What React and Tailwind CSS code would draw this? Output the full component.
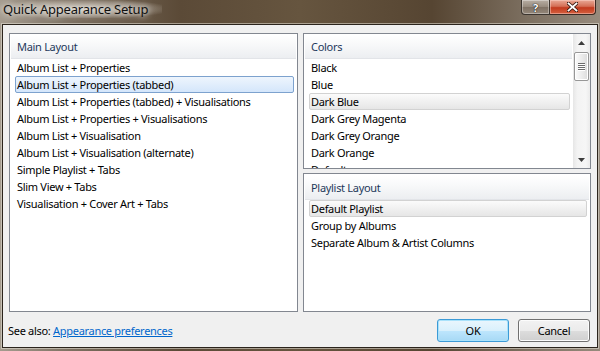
import React from 'react'

/* ---------- datos ---------- */
const mainLayouts = [
  'Album List + Properties',
  'Album List + Properties (tabbed)',
  'Album List + Properties (tabbed) + Visualisations',
  'Album List + Properties + Visualisations',
  'Album List + Visualisation',
  'Album List + Visualisation (alternate)',
  'Simple Playlist + Tabs',
  'Slim View + Tabs',
  'Visualisation + Cover Art + Tabs',
]
const colorSchemes = ['Black', 'Blue', 'Dark Blue', 'Dark Grey Magenta', 'Dark Grey Orange', 'Dark Orange', 'Default']
const playlistLayouts = ['Default Playlist', 'Group by Albums', 'Separate Album & Artist Columns']

/* ---------- piezas ---------- */
const Header = ({ children }) => (
  <div className="mx-[1px] mt-[1px] h-[24px] shrink-0 flex items-center pl-[6px] border-b border-[#e2e4e8] bg-[linear-gradient(#ffffff,#f7f8f9_45%,#eceef1)] text-[#1e395b]">
    {children}
  </div>
)

const Item = ({ text, sel }) => (
  <div
    className={`h-[17px] shrink-0 ml-[5px] mr-[3px] px-[1px] flex items-center rounded-[2px] border whitespace-nowrap
      ${sel === 'active'
        ? 'border-[#7da2ce] bg-[linear-gradient(#eef5fd,#d4e6fb)]'
        : sel === 'inactive'
          ? 'border-[#d2d2d2] bg-[linear-gradient(#fbfbfb,#e6e6e6)]'
          : 'border-transparent'}`}
  >
    {text}
  </div>
)

const ScrollBar = () => (
  <div className="w-[17px] shrink-0 flex flex-col items-center bg-[linear-gradient(90deg,#e6e6e6,#f3f3f3_25%,#f6f6f6_75%,#ebebeb)]">
    <div className="h-[17px] w-full flex items-center justify-center">
      <svg width="7" height="4" viewBox="0 0 7 4"><path d="M3.5 0 L7 4 L0 4 Z" fill="#3c3c3c" /></svg>
    </div>
    <div className="mt-[1px] w-[15px] h-[29px] rounded-[2px] border border-[#979797] bg-[linear-gradient(90deg,#fbfbfb,#ececec_50%,#dcdcdc)] shadow-[inset_0_0_0_1px_#ffffff] flex flex-col items-center justify-center gap-[1px]">
      {[0, 1, 2, 3].map(i => (
        <div key={i} className="w-[7px] h-[1px] bg-[#6c6c6c] shadow-[0_1px_0_#ffffff]" />
      ))}
    </div>
    <div className="flex-1" />
    <div className="h-[17px] w-full flex items-center justify-center">
      <svg width="7" height="4" viewBox="0 0 7 4"><path d="M0 0 L7 0 L3.5 4 Z" fill="#3c3c3c" /></svg>
    </div>
  </div>
)

const Button = ({ children, focused }) => (
  <div
    className={`w-[72px] h-[23px] rounded-[3px] border flex items-center justify-center
      ${focused
        ? 'border-[#3c9ad6] shadow-[inset_0_0_0_1px_#a9e2fb] bg-[linear-gradient(#eaf6fd,#d9f0fc_50%,#bee6fd_51%,#a7d9f5)]'
        : 'border-[#707070] shadow-[inset_0_0_0_1px_#fcfcfc] bg-[linear-gradient(#f2f2f2,#ebebeb_50%,#dddddd_51%,#cfcfcf)]'}`}
  >
    {children}
  </div>
)

export default function App() {
  return (
    <div className="w-[600px] h-[351px] flex flex-col overflow-hidden bg-[linear-gradient(90deg,#a59c8f,#7c6f60_12%,#5b4a37_30%,#66553f_50%,#564532_72%,#7d7061_88%,#978b7d)] font-['Segoe_UI','Noto_Sans',sans-serif] text-[11px] tracking-[-0.3px] leading-[16px] text-black">

      {/* BARRA DE TITULO */}
      <div className="h-[24px] shrink-0 flex items-start">
        <div className="pl-[3px] pt-[1px] pr-[14px] text-[13px] tracking-[-0.2px] leading-[17px] text-[#101010] bg-[radial-gradient(ellipse_at_center,rgba(235,230,220,0.75),rgba(200,192,180,0.35)_60%,transparent_80%)] [text-shadow:0_0_6px_rgba(255,255,255,0.9),0_0_10px_rgba(255,255,255,0.7)]">
          Quick Appearance Setup
        </div>
        <div className="ml-auto mr-[4px] flex h-[15px]">
          <div className="w-[29px] h-[15px] pt-[1px] rounded-bl-[4px] border border-t-0 border-[#3b352f] bg-[linear-gradient(#b8aea3,#968a7d_50%,#7f7265_51%,#948779)] shadow-[inset_0_0_0_1px_rgba(255,255,255,0.35)] flex items-center justify-center text-white text-[11px] leading-[12px] font-bold tracking-normal [text-shadow:0_0_1px_#000,0_0_1px_#000]">
            ?
          </div>
          <div className="w-[46px] h-[15px] rounded-br-[4px] border border-l-0 border-t-0 border-[#3b2a24] bg-[linear-gradient(#e9a996,#d46f56_45%,#c23a1e_55%,#d5613f)] shadow-[inset_0_0_0_1px_rgba(255,220,210,0.45)] flex items-center justify-center">
            <svg width="11" height="10" viewBox="0 0 11 10">
              <path d="M1 1 L10 9 M10 1 L1 9" stroke="#3a1a12" strokeWidth="3.4" strokeLinecap="square" />
              <path d="M1.5 1.5 L9.5 8.5 M9.5 1.5 L1.5 8.5" stroke="#ffffff" strokeWidth="1.8" strokeLinecap="square" />
            </svg>
          </div>
        </div>
      </div>

      {/* CUERPO */}
      <div className="mx-[2px] mb-[3px] flex-1 border border-[#2b241c] shadow-[0_0_0_1px_rgba(230,225,215,0.55)] bg-[#f0f0f0] flex flex-col">
        <div className="pt-[8px] px-[6px] grid grid-cols-[289px_288px] gap-x-[5px] h-[287px]">

          {/* MAIN LAYOUT */}
          <div className="h-[279px] border border-[#828790] bg-white flex flex-col overflow-hidden">
            <Header>Main Layout</Header>
            {mainLayouts.map((t, i) => (
              <Item key={t} text={t} sel={i === 1 ? 'active' : ''} />
            ))}
          </div>

          <div className="flex flex-col gap-[4px] h-[279px]">
            {/* COLORS */}
            <div className="h-[136px] shrink-0 border border-[#828790] bg-white flex overflow-hidden">
              <div className="flex-1 min-w-0 flex flex-col overflow-hidden">
                <Header>Colors</Header>
                {colorSchemes.map((t, i) => (
                  <Item key={t} text={t} sel={i === 2 ? 'inactive' : ''} />
                ))}
              </div>
              <ScrollBar />
            </div>

            {/* PLAYLIST LAYOUT */}
            <div className="flex-1 border border-[#828790] bg-white flex flex-col overflow-hidden pt-[1px]">
              <Header>Playlist Layout</Header>
              {playlistLayouts.map((t, i) => (
                <Item key={t} text={t} sel={i === 0 ? 'inactive' : ''} />
              ))}
            </div>
          </div>
        </div>

        {/* PIE */}
        <div className="flex items-start flex-1">
          <div className="ml-[5px] mt-[11px] whitespace-nowrap">
            See also: <span className="text-[#0066cc] underline">Appearance preferences</span>
          </div>
          <div className="ml-auto mr-[7px] mt-[7px] flex gap-[9px]">
            <Button focused>OK</Button>
            <Button>Cancel</Button>
          </div>
        </div>
      </div>
    </div>
  )
}
